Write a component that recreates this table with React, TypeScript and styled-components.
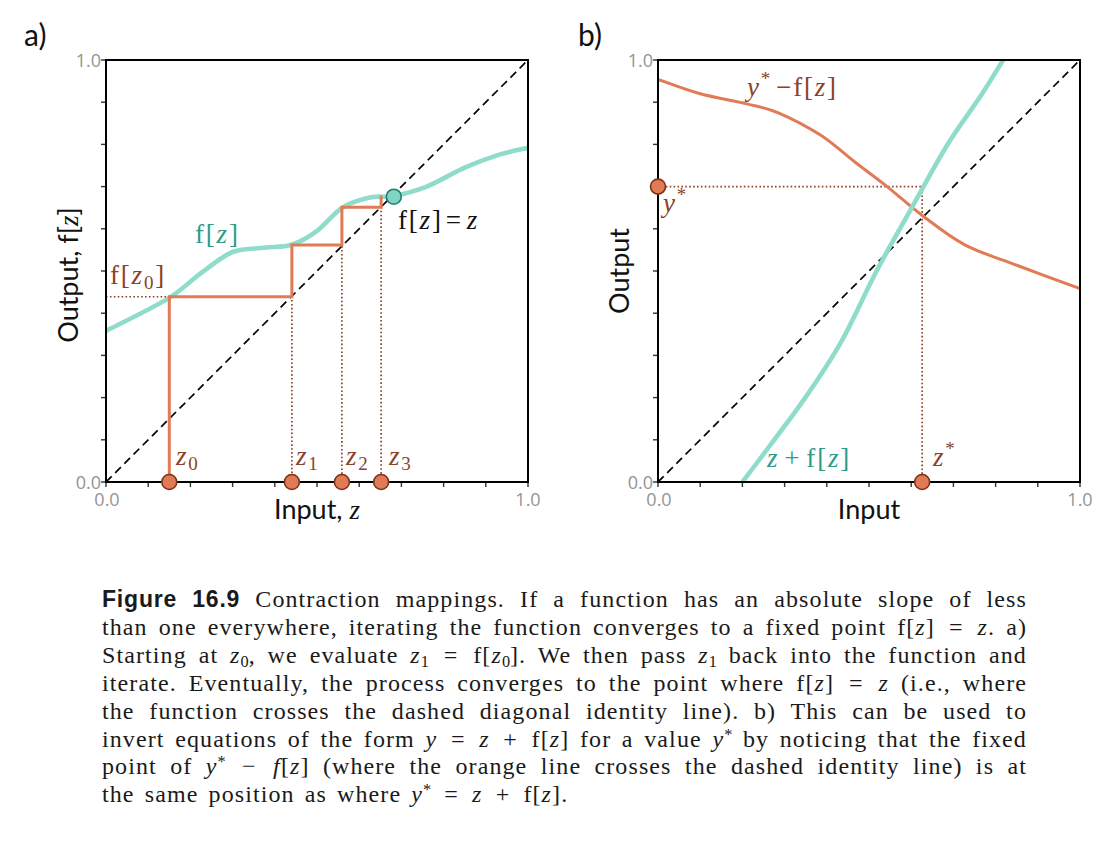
import React from 'react';
import styled, { createGlobalStyle } from 'styled-components';

const Global = createGlobalStyle`
  html, body { margin: 0; padding: 0; background: #fff; }
  body { width: 1112px; height: 842px; overflow: hidden; }
`;

const W = 422;
const TOP = 60;
const BOT = 482;
const TEAL = '#8fdcca';
const TEAL_TEXT = '#2e9c89';
const ORANGE = '#e07b56';
const BROWN = '#8b4226';

type P = [number, number];

const sx = (ox: number, u: number) => ox + W * u;
const sy = (v: number) => BOT - W * v;

function smooth(ox: number, pts: P[]): string {
  const q = pts.map(([u, v]) => [sx(ox, u), sy(v)] as P);
  let d = `M${q[0][0].toFixed(1)},${q[0][1].toFixed(1)}`;
  for (let i = 0; i < q.length - 1; i++) {
    const p0 = q[i - 1] || q[i];
    const p1 = q[i];
    const p2 = q[i + 1];
    const p3 = q[i + 2] || p2;
    const c1 = [p1[0] + (p2[0] - p0[0]) / 6, p1[1] + (p2[1] - p0[1]) / 6];
    const c2 = [p2[0] - (p3[0] - p1[0]) / 6, p2[1] - (p3[1] - p1[1]) / 6];
    d += ` C${c1[0].toFixed(1)},${c1[1].toFixed(1)} ${c2[0].toFixed(1)},${c2[1].toFixed(1)} ${p2[0].toFixed(1)},${p2[1].toFixed(1)}`;
  }
  return d;
}

const Page = styled.div`
  width: 1112px;
  height: 842px;
  background: #fff;
  display: flex;
  flex-direction: column;
`;

const Figures = styled.div`
  display: flex;
  height: 545px;
`;

const Plot = styled.svg`
  display: block;
  flex: 0 0 556px;
  width: 556px;
  height: 545px;
  overflow: visible;
`;

const FrameRect = styled.rect`
  fill: none;
  stroke: #000;
  stroke-width: 2;
`;

const Tick = styled.line`
  stroke: #333;
  stroke-width: 1.4;
`;

const TickLabel = styled.text`
  font-family: 'Open Sans', 'DejaVu Sans', sans-serif;
  font-size: 18px;
  fill: #959595;
`;

const PanelLabel = styled.text`
  font-family: Lato, 'Open Sans', sans-serif;
  font-size: 30px;
  fill: #111;
`;

const AxisTitle = styled.text`
  font-family: Lato, 'Open Sans', sans-serif;
  font-size: 27px;
  fill: #111;
`;

const MathText = styled.text<{ $c: string }>`
  font-family: 'Liberation Serif', 'Times New Roman', serif;
  font-size: 27px;
  letter-spacing: 1.8px;
  fill: ${(p) => p.$c};
`;

const It = styled.tspan`
  font-family: 'Liberation Serif', serif;
  font-style: italic;
`;

const Small = styled.tspan`
  font-size: 19px;
`;

const Curve = styled.path<{ $c: string; $w: number }>`
  fill: none;
  stroke: ${(p) => p.$c};
  stroke-width: ${(p) => p.$w};
  stroke-linecap: round;
  stroke-linejoin: miter;
`;

const Dotted = styled.path`
  fill: none;
  stroke: ${BROWN};
  stroke-width: 1.7;
  stroke-dasharray: 1.6 2.3;
`;

const Diagonal = styled.line`
  stroke: #000;
  stroke-width: 1.7;
  stroke-dasharray: 8 5;
`;

const Dot = styled.circle<{ $fill: string; $stroke: string }>`
  fill: ${(p) => p.$fill};
  stroke: ${(p) => p.$stroke};
  stroke-width: 1.6;
`;

function Axes({ ox, id }: { ox: number; id: string }) {
  const ticks = Array.from({ length: 11 }, (_, i) => i / 10);
  return (
    <g>
      {ticks.map((t) => (
        <Tick key={`y${id}${t}`} x1={ox - 5} x2={ox} y1={sy(t)} y2={sy(t)} />
      ))}
      {ticks.map((t) => (
        <Tick key={`x${id}${t}`} x1={sx(ox, t)} x2={sx(ox, t)} y1={BOT} y2={BOT + 5} />
      ))}
      <FrameRect x={ox} y={TOP} width={W} height={W} />
      <TickLabel x={ox - 5} y={TOP + 6.5} textAnchor="end">1.0</TickLabel>
      <TickLabel x={ox - 5} y={BOT + 6.5} textAnchor="end">0.0</TickLabel>
      <TickLabel x={ox + 1} y={BOT + 24} textAnchor="middle">0.0</TickLabel>
      <TickLabel x={ox + W} y={BOT + 24} textAnchor="middle">1.0</TickLabel>
    </g>
  );
}

const OXA = 106;
const OXB = 102;

const tealA: P[] = [
  [0, 0.358], [0.146, 0.434], [0.225, 0.495], [0.3, 0.545], [0.375, 0.555],
  [0.44, 0.562], [0.5, 0.595], [0.56, 0.65], [0.625, 0.674], [0.682, 0.678],
  [0.76, 0.7], [0.85, 0.745], [0.93, 0.775], [1, 0.792],
];

const orangeB: P[] = [
  [0, 0.954], [0.1, 0.92], [0.21, 0.896], [0.285, 0.875], [0.385, 0.822],
  [0.468, 0.757], [0.543, 0.7], [0.627, 0.631], [0.727, 0.562], [0.852, 0.513], [1, 0.458],
];

const tealB: P[] = [
  [0.185, -0.02], [0.268, 0.09], [0.352, 0.204], [0.435, 0.334], [0.518, 0.5],
  [0.602, 0.651], [0.685, 0.798], [0.768, 0.92], [0.83, 1.02],
];

function PanelA() {
  const ox = OXA;
  const X = (u: number) => sx(ox, u);
  const z = [0.15, 0.4405, 0.559, 0.652];
  const f = [0.439, 0.5616, 0.651, 0.676];
  const stair = `M${X(z[0])},${sy(0)} V${sy(f[0])} H${X(z[1])} V${sy(f[1])} H${X(z[2])} V${sy(f[2])} H${X(z[3])} V${sy(f[3])}`;
  const dots = `M${X(0)},${sy(f[0])} H${X(z[0])} M${X(z[1])},${sy(z[1])} V${BOT} M${X(z[2])},${sy(z[2])} V${BOT} M${X(z[3])},${sy(z[3])} V${BOT}`;
  const zx = [176, 296, 346, 389];
  return (
    <Plot viewBox="0 0 556 545">
      <defs>
        <clipPath id="clipA">
          <rect x={ox} y={TOP} width={W} height={W} />
        </clipPath>
      </defs>
      <PanelLabel x={24} y={46}>a)</PanelLabel>
      <g clipPath="url(#clipA)">
        <Curve d={smooth(ox, tealA)} $c={TEAL} $w={4.6} />
        <Diagonal x1={X(0)} y1={sy(0)} x2={X(1)} y2={sy(1)} />
        <Dotted d={dots} />
        <Curve d={stair} $c={ORANGE} $w={3} />
      </g>
      <Axes ox={ox} id="a" />
      {z.map((u) => (
        <Dot key={u} cx={X(u)} cy={BOT} r={7.5} $fill={ORANGE} $stroke="#7a3318" />
      ))}
      <Dot cx={X(0.682)} cy={sy(0.676)} r={7.5} $fill="#7fd5c1" $stroke="#1d7f6d" />
      {zx.map((x, i) => (
        <MathText key={i} x={x} y={465} $c={BROWN}>
          <It>z</It>
          <Small dy={5}>{i}</Small>
        </MathText>
      ))}
      <MathText x={110} y={284} $c={BROWN}>
        f[<It>z</It>
        <Small dy={5}>0</Small>
        <tspan dy={-5}>]</tspan>
      </MathText>
      <MathText x={195} y={243} $c={TEAL_TEXT}>
        f[<It>z</It>]
      </MathText>
      <MathText x={398} y={229} $c="#111">
        f[<It>z</It>]<tspan dx={3}>=</tspan>
        <It dx={4}>z</It>
      </MathText>
      <AxisTitle transform="translate(78,275) rotate(-90)" textAnchor="middle">
        Output, f[<It>z</It>]
      </AxisTitle>
      <AxisTitle x={317} y={519} textAnchor="middle">
        Input, <It>z</It>
      </AxisTitle>
    </Plot>
  );
}

function PanelB() {
  const ox = OXB;
  const X = (u: number) => sx(ox, u);
  const ys = 0.7;
  const zs = 0.626;
  const dots = `M${X(0)},${sy(ys)} H${X(zs)} V${BOT}`;
  return (
    <Plot viewBox="0 0 556 545">
      <defs>
        <clipPath id="clipB">
          <rect x={ox} y={TOP} width={W} height={W} />
        </clipPath>
      </defs>
      <PanelLabel x={22} y={46}>b)</PanelLabel>
      <g clipPath="url(#clipB)">
        <Diagonal x1={X(0)} y1={sy(0)} x2={X(1)} y2={sy(1)} />
        <Dotted d={dots} />
        <Curve d={smooth(ox, orangeB)} $c={ORANGE} $w={3} />
        <Curve d={smooth(ox, tealB)} $c={TEAL} $w={4.6} />
      </g>
      <Axes ox={ox} id="b" />
      <Dot cx={X(0)} cy={sy(ys)} r={7.5} $fill={ORANGE} $stroke="#7a3318" />
      <Dot cx={X(zs)} cy={BOT} r={7.5} $fill={ORANGE} $stroke="#7a3318" />
      <MathText x={191} y={96} $c={BROWN}>
        <It>y</It>
        <Small dy={-11}>*</Small>
        <tspan dy={11} dx={4}>−f[</tspan>
        <It>z</It>]
      </MathText>
      <MathText x={107} y={212} $c={BROWN}>
        <It>y</It>
        <Small dy={-11}>*</Small>
      </MathText>
      <MathText x={377} y={466} $c={BROWN}>
        <It>z</It>
        <Small dy={-11}>*</Small>
      </MathText>
      <MathText x={211} y={467} $c={TEAL_TEXT}>
        <It>z</It>
        <tspan dx={5}>+</tspan>
        <tspan dx={5}>f[</tspan>
        <It>z</It>]
      </MathText>
      <AxisTitle transform="translate(73,271) rotate(-90)" textAnchor="middle">
        Output
      </AxisTitle>
      <AxisTitle x={313} y={519} textAnchor="middle">
        Input
      </AxisTitle>
    </Plot>
  );
}

const Caption = styled.div`
  margin: 41px 0 0 102px;
  width: 925px;
  font-family: 'Liberation Serif', 'Times New Roman', serif;
  font-size: 24px;
  line-height: 27.9px;
  letter-spacing: 1.1px;
  word-spacing: 3px;
  color: #1a1a1a;
`;

const Line = styled.div<{ $last?: boolean }>`
  text-align: justify;
  text-align-last: ${(p) => (p.$last ? 'left' : 'justify')};
`;

const FigNo = styled.b`
  font-family: 'Liberation Sans', Arial, sans-serif;
  font-weight: 700;
  font-size: 23px;
  letter-spacing: 0.8px;
`;

const V = styled.i`
  font-style: italic;
`;

const Op = styled.span`
  margin: 0 3px;
`;

const Sub = styled.sub`
  font-size: 0.68em;
  vertical-align: -0.22em;
  line-height: 0;
  letter-spacing: 0;
`;

const Sup = styled.sup`
  font-size: 0.68em;
  vertical-align: 0.42em;
  line-height: 0;
  letter-spacing: 0;
`;

export default function App() {
  return (
    <Page>
      <Global />
      <Figures>
        <PanelA />
        <PanelB />
      </Figures>
      <Caption>
        <Line>
          <FigNo>Figure 16.9</FigNo> Contraction mappings. If a function has an absolute slope of less
        </Line>
        <Line>
          than one everywhere, iterating the function converges to a fixed point f[<V>z</V>] <Op>=</Op> <V>z</V>. a)
        </Line>
        <Line>
          Starting at <V>z</V><Sub>0</Sub>, we evaluate <V>z</V><Sub>1</Sub> <Op>=</Op> f[<V>z</V><Sub>0</Sub>]. We then pass <V>z</V><Sub>1</Sub> back into the function and
        </Line>
        <Line>
          iterate. Eventually, the process converges to the point where f[<V>z</V>] <Op>=</Op> <V>z</V> (i.e., where
        </Line>
        <Line>the function crosses the dashed diagonal identity line). b) This can be used to</Line>
        <Line>
          invert equations of the form <V>y</V> <Op>=</Op> <V>z</V> <Op>+</Op> f[<V>z</V>] for a value <V>y</V><Sup>*</Sup> by noticing that the fixed
        </Line>
        <Line>
          point of <V>y</V><Sup>*</Sup> <Op>−</Op> <V>f</V>[<V>z</V>] (where the orange line crosses the dashed identity line) is at
        </Line>
        <Line $last>
          the same position as where <V>y</V><Sup>*</Sup> <Op>=</Op> <V>z</V> <Op>+</Op> f[<V>z</V>].
        </Line>
      </Caption>
    </Page>
  );
}
